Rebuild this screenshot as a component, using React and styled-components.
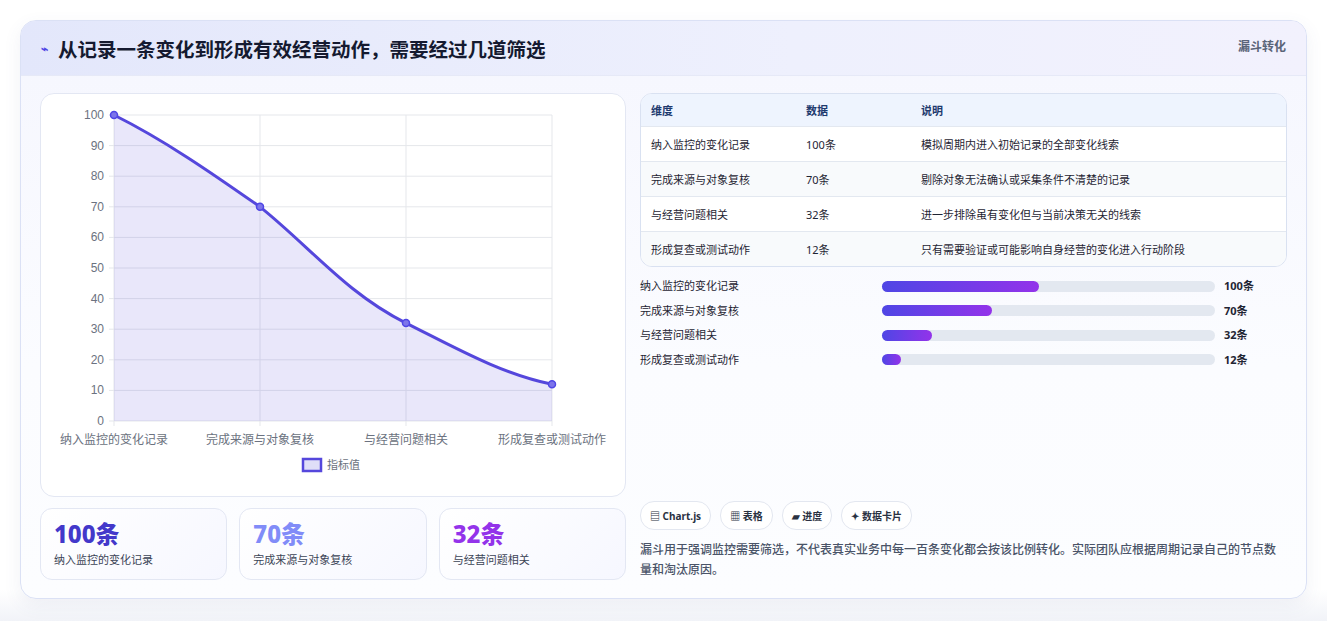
import React from 'react';
import styled, { createGlobalStyle } from 'styled-components';

const Global = createGlobalStyle`
  body { margin: 0; background: #fff; font-family: "Noto Sans", "Noto Sans CJK SC", sans-serif; }
`;

const Page = styled.div`
  padding: 20px 20px 22px 20px;
  background: linear-gradient(#fff 95%, #f1f3f8);
`;

const Card = styled.div`
  border: 1px solid #dbe1f5;
  border-radius: 16px;
  overflow: hidden;
  background: linear-gradient(180deg, #f5f6fe, #fbfcff 60%, #fcfdff);
  box-shadow: 0 6px 18px rgba(80, 90, 140, 0.08);
`;

const Header = styled.div`
  height: 54px;
  display: flex;
  align-items: center;
  justify-content: space-between;
  padding: 0 20px;
  background: linear-gradient(90deg, #e3e7fb, #eef0fd 60%, #f2f1fd);
  border-bottom: 1px solid #e6e9f7;
`;

const Title = styled.h2`
  margin: 0;
  font-size: 19.5px;
  font-weight: 700;
  color: #151a30;
  display: flex;
  align-items: center;
  gap: 10px;
  & span.i { color: #4f46e5; font-size: 12px; }
`;

const Tag = styled.span`
  font-size: 12px;
  font-weight: 700;
  color: #5a6478;
  align-self: flex-start;
  margin-top: 16px;
`;

const Body = styled.div`
  display: grid;
  grid-template-columns: 586px 647px;
  gap: 14px;
  padding: 17px 19px 18px 19px;
`;

const Col = styled.div`
  display: flex;
  flex-direction: column;
`;

const ChartBox = styled.div`
  height: 402px;
  border: 1px solid #e3e7f3;
  border-radius: 14px;
  background: #fff;
`;

const Stats = styled.div`
  display: grid;
  grid-template-columns: repeat(3, 1fr);
  gap: 12px;
  margin-top: 11px;
`;

const Stat = styled.div`
  height: 72px;
  border: 1px solid #e3e7f3;
  border-radius: 12px;
  background: linear-gradient(135deg, #fff, #f6f7ff);
  padding: 10px 13px;
  box-sizing: border-box;
`;

const StatNum = styled.div`
  font-size: 24px;
  font-weight: 800;
  color: ${p => p.c};
  line-height: 30px;
`;

const StatLabel = styled.div`
  font-size: 11px;
  color: #3b4456;
  margin-top: 2px;
`;

const Table = styled.div`
  border: 1px solid #d9e1f1;
  border-radius: 12px;
  overflow: hidden;
  background: #fff;
`;

const Row = styled.div`
  display: grid;
  grid-template-columns: 155px 115px 1fr;
  height: ${p => (p.head ? 32 : 35)}px;
  box-sizing: border-box;
  align-items: center;
  padding: 0 10px;
  font-size: 11px;
  color: ${p => (p.head ? '#1e3a6e' : '#1f2533')};
  font-weight: ${p => (p.head ? 700 : 400)};
  background: ${p => (p.head ? '#eef4fe' : p.alt ? '#f8fafc' : '#fff')};
  border-top: ${p => (p.head ? 'none' : '1px solid #e3e8f0')};
`;

const Bars = styled.div`
  display: flex;
  flex-direction: column;
  gap: 8px;
  margin-top: 11px;
`;

const BarRow = styled.div`
  display: grid;
  grid-template-columns: 233px 333px 1fr;
  align-items: center;
  gap: 0 9px;
  font-size: 11px;
  line-height: 16.5px;
  color: #1f2533;
`;

const Track = styled.div`
  height: 11px;
  border-radius: 6px;
  background: #e3e8f0;
`;

const Fill = styled.div`
  height: 100%;
  border-radius: 6px;
  background: linear-gradient(90deg, #4f46e5, #9333ea);
`;

const BarVal = styled.span`
  font-weight: 700;
`;

const Chips = styled.div`
  display: flex;
  gap: 9px;
  margin-top: auto;
`;

const Chip = styled.span`
  height: 27px;
  padding: 0 9px;
  display: inline-flex;
  align-items: center;
  border: 1px solid #e3e7f0;
  border-radius: 14px;
  background: #fff;
  font-size: 10px;
  font-weight: 700;
  color: #2a3142;
`;

const Note = styled.p`
  margin: 10px 0 0;
  padding-right: 6px;
  font-size: 12px;
  line-height: 20px;
  color: #4a5468;
  font-weight: 500;
`;

const data = [
  { label: '纳入监控的变化记录', v: 100, note: '模拟周期内进入初始记录的全部变化线索' },
  { label: '完成来源与对象复核', v: 70, note: '剔除对象无法确认或采集条件不清楚的记录' },
  { label: '与经营问题相关', v: 32, note: '进一步排除虽有变化但与当前决策无关的线索' },
  { label: '形成复查或测试动作', v: 12, note: '只有需要验证或可能影响自身经营的变化进入行动阶段' },
];

const Chart = () => {
  const x0 = 73, x1 = 511, yTop = 21, yBot = 327;
  const px = i => x0 + (i * (x1 - x0)) / 3;
  const py = v => yBot - (v / 100) * (yBot - yTop);
  const pts = data.map((d, i) => [px(i), py(d.v)]);
  const path = 'M' + pts[0].join(',') +
    ` C${pts[0][0] + 50},${pts[0][1] + 25} ${pts[1][0] - 50},${pts[1][1] - 35} ${pts[1][0]},${pts[1][1]}` +
    ` C${pts[1][0] + 50},${pts[1][1] + 40} ${pts[2][0] - 60},${pts[2][1] - 30} ${pts[2][0]},${pts[2][1]}` +
    ` C${pts[2][0] + 50},${pts[2][1] + 25} ${pts[3][0] - 50},${pts[3][1] - 10} ${pts[3][0]},${pts[3][1]}`;
  return (
    <svg width="584" height="400" style={{ fontFamily: 'Liberation Sans, sans-serif' }}>
      {[0, 10, 20, 30, 40, 50, 60, 70, 80, 90, 100].map(t => (
        <g key={t}>
          <line x1={x0 - 5} x2={x1} y1={py(t)} y2={py(t)} stroke="#e5e7eb" />
          <text x={x0 - 10} y={py(t) + 4} fontSize="12" fill="#6b7280" textAnchor="end">{t}</text>
        </g>
      ))}
      {[0, 1, 2, 3].map(i => (
        <line key={i} x1={px(i)} x2={px(i)} y1={yTop} y2={yBot + 5} stroke="#e5e7eb" />
      ))}
      <path d={`${path} L${x1},${yBot} L${x0},${yBot} Z`} fill="rgba(99,88,220,0.14)" />
      <path d={path} fill="none" stroke="#5547dc" strokeWidth="3" />
      {pts.map((p, i) => (
        <circle key={i} cx={p[0]} cy={p[1]} r="3.5" fill="#7c74ea" stroke="#4f46e5" strokeWidth="1.5" />
      ))}
      {data.map((d, i) => (
        <text key={i} x={px(i)} y={350} fontSize="12" fill="#6b7280" textAnchor="middle"
          style={{ fontFamily: 'Noto Sans CJK SC, sans-serif' }}>{d.label}</text>
      ))}
      <rect x="262" y="365" width="18" height="12" fill="rgba(99,88,220,0.2)" stroke="#5547dc" strokeWidth="2.5" />
      <text x="286" y="375" fontSize="11" fill="#6b7280" style={{ fontFamily: 'Noto Sans CJK SC, sans-serif' }}>指标值</text>
    </svg>
  );
};

export default function App() {
  return (
    <Page>
      <Global />
      <Card>
        <Header>
          <Title><span className="i">⌁</span>从记录一条变化到形成有效经营动作，需要经过几道筛选</Title>
          <Tag>漏斗转化</Tag>
        </Header>
        <Body>
          <Col>
            <ChartBox><Chart /></ChartBox>
            <Stats>
              <Stat><StatNum c="#4338ca">100条</StatNum><StatLabel>纳入监控的变化记录</StatLabel></Stat>
              <Stat><StatNum c="#818cf8">70条</StatNum><StatLabel>完成来源与对象复核</StatLabel></Stat>
              <Stat><StatNum c="#9333ea">32条</StatNum><StatLabel>与经营问题相关</StatLabel></Stat>
            </Stats>
          </Col>
          <Col>
            <Table>
              <Row head><span>维度</span><span>数据</span><span>说明</span></Row>
              {data.map((d, i) => (
                <Row key={i} alt={i % 2 === 1}><span>{d.label}</span><span>{d.v}条</span><span>{d.note}</span></Row>
              ))}
            </Table>
            <Bars>
              {data.map((d, i) => (
                <BarRow key={i}>
                  <span>{d.label}</span>
                  <Track><Fill style={{ width: `${d.v * 0.47}%` }} /></Track>
                  <BarVal>{d.v}条</BarVal>
                </BarRow>
              ))}
            </Bars>
            <Chips>
              <Chip>▤ Chart.js</Chip>
              <Chip>▦ 表格</Chip>
              <Chip>▰ 进度</Chip>
              <Chip>✦ 数据卡片</Chip>
            </Chips>
            <Note>漏斗用于强调监控需要筛选，不代表真实业务中每一百条变化都会按该比例转化。实际团队应根据周期记录自己的节点数量和淘汰原因。</Note>
          </Col>
        </Body>
      </Card>
    </Page>
  );
}
